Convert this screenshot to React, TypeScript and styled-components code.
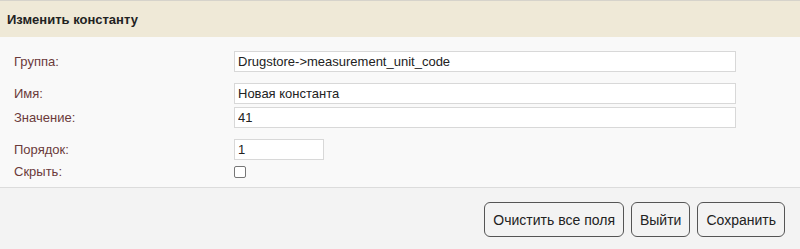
import React from "react";
import styled, { createGlobalStyle } from "styled-components";

const GlobalStyle = createGlobalStyle`
  html, body {
    margin: 0;
    padding: 0;
    background: #f9f9f9;
    font-family: "Liberation Sans", Arial, sans-serif;
  }
`;

const Dialog = styled.div`
  width: 800px;
  height: 249px;
  display: flex;
  flex-direction: column;
  background: #f9f9f9;
`;

const Header = styled.div`
  height: 36px;
  flex: none;
  border-top: 1px solid #d6d3cb;
  background: #efe9d7;
  display: flex;
  align-items: center;
  padding-left: 7px;
  font-size: 13px;
  font-weight: bold;
  color: #222;
`;

const Body = styled.div`
  flex: none;
  padding: 14px 0 8px 14px;
  border-bottom: 1px solid #dcdcdc;
  background: #f9f9f9;
`;

const Row = styled.div<{ $space: number }>`
  display: flex;
  align-items: center;
  margin-bottom: ${(p) => p.$space}px;
`;

const Label = styled.label`
  width: 220px;
  flex: none;
  font-size: 13px;
  line-height: 15px;
  color: #6b3a3a;
`;

const Input = styled.input<{ $w: number }>`
  width: ${(p) => p.$w}px;
  height: 21px;
  box-sizing: border-box;
  margin: 0;
  padding: 0 3px;
  border: 1px solid #d8d8d8;
  background: #fff;
  font-family: "Liberation Sans", Arial, sans-serif;
  font-size: 13px;
  color: #222;
  outline: none;
`;

const Check = styled.input`
  width: 12px;
  height: 12px;
  margin: 0;
  appearance: none;
  border: 1px solid #767676;
  border-radius: 2px;
  background: #fff;
  box-sizing: border-box;
`;

const Footer = styled.div`
  flex: 1;
  background: #f3f3f3;
  display: flex;
  justify-content: flex-end;
  align-items: flex-start;
  gap: 7px;
  padding: 14px 15px 0 0;
`;

const Button = styled.button`
  height: 35px;
  padding: 0 8px;
  border: 1px solid #555;
  border-radius: 6px;
  background: #f3f3f3;
  font-family: "Liberation Sans", Arial, sans-serif;
  font-size: 14px;
  color: #222;
`;

export default function App() {
  return (
    <>
      <GlobalStyle />
      <Dialog>
        <Header>Изменить константу</Header>
        <Body>
          <Row $space={11}>
            <Label>Группа:</Label>
            <Input $w={502} defaultValue="Drugstore->measurement_unit_code" />
          </Row>
          <Row $space={3}>
            <Label>Имя:</Label>
            <Input $w={502} defaultValue="Новая константа" />
          </Row>
          <Row $space={11}>
            <Label>Значение:</Label>
            <Input $w={502} defaultValue="41" />
          </Row>
          <Row $space={4}>
            <Label>Порядок:</Label>
            <Input $w={90} defaultValue="1" />
          </Row>
          <Row $space={0}>
            <Label>Скрыть:</Label>
            <Check type="checkbox" />
          </Row>
        </Body>
        <Footer>
          <Button>Очистить все поля</Button>
          <Button>Выйти</Button>
          <Button>Сохранить</Button>
        </Footer>
      </Dialog>
    </>
  );
}
